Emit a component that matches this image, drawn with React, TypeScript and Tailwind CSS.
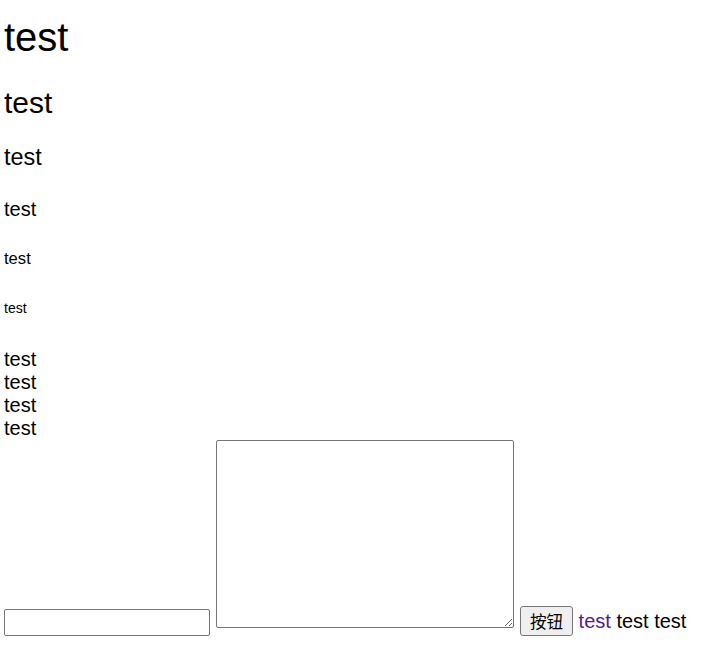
import React from 'react';

const FONT = { fontFamily: '"Liberation Sans", Arial, "Noto Sans CJK SC", sans-serif' };

export default function App() {
  return (
    <div className="bg-white text-black pl-[4px] pt-[14px] w-[716px] h-[659px] overflow-hidden" style={FONT}>
      <h1 className="text-[40px] leading-[46px] font-normal">test</h1>
      <h2 className="text-[30px] leading-[34.5px] font-normal mt-[26px]">test</h2>
      <h3 className="text-[23.4px] leading-[27px] font-normal mt-[23.5px]">test</h3>
      <h4 className="text-[20px] leading-[23px] font-normal mt-[27px]">test</h4>
      <h5 className="text-[16.6px] leading-[19px] font-normal mt-[28px]">test</h5>
      <h6 className="text-[14px] leading-[16px] font-normal mt-[31.6px]">test</h6>

      <div className="mt-[32.3px] text-[20px] leading-[23px]">
        <div>test</div>
        <div>test</div>
        <div>test</div>
        <div>test</div>
      </div>

      <div className="flex items-end mt-[0.5px] text-[20px] leading-[23px]">
        <input
          type="text"
          className="w-[206px] h-[27px] border border-[#767676] rounded-[2px] bg-white px-[2px] text-[16.6px] outline-none"
        />
        <textarea className="ml-[6px] mb-[8px] w-[298px] h-[188px] border border-[#767676] rounded-[2px] bg-white" />
        <button
          type="button"
          className="ml-[6px] w-[53px] h-[30px] border border-[#767676] rounded-[3px] bg-[#efefef] text-[16.6px] leading-none"
          style={{ fontFamily: '"Noto Sans CJK SC", "Liberation Sans", sans-serif' }}
        >
          按钮
        </button>
        <span className="ml-[5.6px] mb-[3px] whitespace-nowrap">
          <a href="#" className="text-[#551a8b]">test</a> test test
        </span>
      </div>
    </div>
  );
}
